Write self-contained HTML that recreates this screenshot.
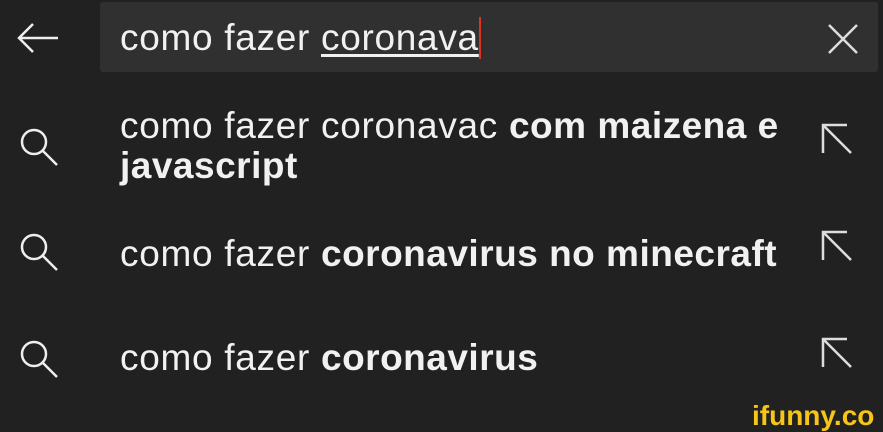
<!DOCTYPE html>
<html><head><style>
html,body{margin:0;padding:0;width:883px;height:426px;overflow:hidden;background:#212121;font-family:"Liberation Sans",sans-serif;color:#f1f1f1;}
.box{position:absolute;left:100px;top:2px;width:778px;height:70px;background:#303030;border-radius:3px;}
.t{position:absolute;left:120px;font-size:37px;white-space:nowrap;letter-spacing:0.7px;}
b{font-weight:bold;letter-spacing:0.5px;}
svg{position:absolute;}
.wm{position:absolute;left:752px;top:400px;font-size:28px;font-weight:bold;color:#f5c518;}
</style></head><body>
<div class="box"></div>
<svg style="left:15px;top:20px" width="48" height="38" viewBox="0 0 48 38"><path d="M43 18H5M18 4L4 18l14 14" stroke="#eee" stroke-width="2.5" fill="none"/></svg>
<div class="t" style="top:17px">como fazer <span style="text-decoration:underline;text-underline-offset:4px">coronava</span><span style="display:inline-block;width:2px;height:42px;background:#d32;vertical-align:-9px"></span></div>
<svg style="left:826px;top:22px" width="34" height="34" viewBox="0 0 34 34"><path d="M3 3L31 31M31 3L3 31" stroke="#ddd" stroke-width="2.5"/></svg>

<svg style="left:19px;top:127px" width="42" height="42" viewBox="0 0 42 42"><circle cx="15" cy="15" r="12" stroke="#eee" stroke-width="2.5" fill="none"/><path d="M24 24L38 38" stroke="#eee" stroke-width="2.5"/></svg>
<div class="t" style="top:105px">como fazer coronavac <b>com maizena e</b></div>
<div class="t" style="top:145px"><b>javascript</b></div>
<svg style="left:820px;top:122px" width="34" height="34" viewBox="0 0 34 34"><path d="M3 31V3h24M3 3l28 28" stroke="#ddd" stroke-width="2.5" fill="none"/></svg>

<svg style="left:19px;top:232px" width="42" height="42" viewBox="0 0 42 42"><circle cx="15" cy="15" r="12" stroke="#eee" stroke-width="2.5" fill="none"/><path d="M24 24L38 38" stroke="#eee" stroke-width="2.5"/></svg>
<div class="t" style="top:233px">como fazer <b>coronavirus no minecraft</b></div>
<svg style="left:820px;top:229px" width="34" height="34" viewBox="0 0 34 34"><path d="M3 31V3h24M3 3l28 28" stroke="#ddd" stroke-width="2.5" fill="none"/></svg>

<svg style="left:19px;top:339px" width="42" height="42" viewBox="0 0 42 42"><circle cx="15" cy="15" r="12" stroke="#eee" stroke-width="2.5" fill="none"/><path d="M24 24L38 38" stroke="#eee" stroke-width="2.5"/></svg>
<div class="t" style="top:337px">como fazer <b>coronavirus</b></div>
<svg style="left:820px;top:336px" width="34" height="34" viewBox="0 0 34 34"><path d="M3 31V3h24M3 3l28 28" stroke="#ddd" stroke-width="2.5" fill="none"/></svg>

<div class="wm">ifunny.co</div>
</body></html>
